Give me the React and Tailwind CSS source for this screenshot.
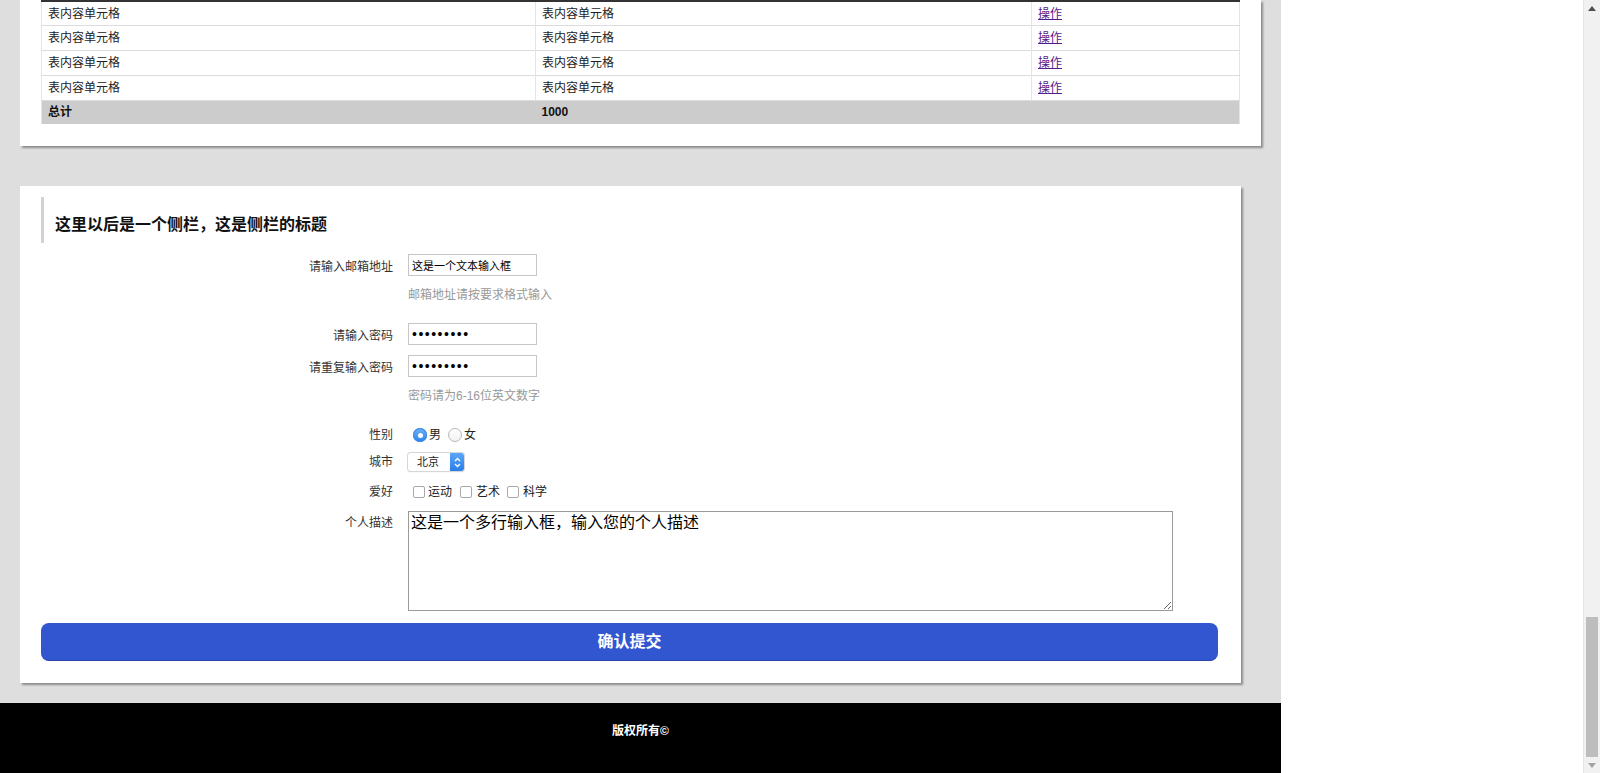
const bodyRows = [1, 2, 3, 4];

function FormRow({ label, children, className = "", top = false, shift = false }) {
  return (
    <div className={`flex ${top ? "items-start" : "items-center"} ${className}`}>
      <label
        className={`w-[352px] shrink-0 text-right text-[12px] leading-[18px] text-[#333] ${top ? "pt-[3px]" : ""} ${shift ? "translate-y-[2px]" : ""}`}
      >
        {label}
      </label>
      <div className="ml-[15px] flex items-center">{children}</div>
    </div>
  );
}

function Hint({ children, className = "" }) {
  return (
    <div className={`ml-[367px] text-[12px] leading-[18px] text-[#999] ${className}`}>{children}</div>
  );
}

function Radio({ checked }) {
  return checked ? (
    <span className="flex h-[14px] w-[14px] items-center justify-center rounded-full bg-gradient-to-b from-[#6cb2f7] to-[#2f84ec] shadow-[inset_0_0_0_1px_#3b86e0]">
      <span className="h-[5px] w-[5px] rounded-full bg-white" />
    </span>
  ) : (
    <span className="h-[14px] w-[14px] rounded-full border border-[#b8b8b8] bg-gradient-to-b from-white to-[#f1f1f1]" />
  );
}

function Checkbox() {
  return <span className="h-[12px] w-[12px] rounded-[2px] border border-[#a9a9a9] bg-white" />;
}

export default function App() {
  return (
    <div className="flex h-[773px] w-[1600px] overflow-hidden bg-white font-['Liberation_Sans','Noto_Sans_CJK_SC',sans-serif] text-[#222]">
      <div className="flex w-[1281px] shrink-0 flex-col bg-[#dedede]">
        {/* table card */}
        <div className="ml-5 w-[1241px] bg-white px-[21px] pb-[22px] shadow-[2px_2px_2px_#8c8c8c]">
          <table className="w-full table-fixed border-collapse border-x border-t-2 border-x-[#e4e4e4] border-t-[#333] text-[12px] text-[#222]">
            <colgroup>
              <col className="w-[494px]" />
              <col className="w-[496px]" />
              <col />
            </colgroup>
            <tbody>
              {bodyRows.map((r) => (
                <tr key={r} className="h-[24.8px] border-b border-[#dcdcdc]">
                  <td className="border-r border-[#e4e4e4] px-[6px] leading-[18px]">表内容单元格</td>
                  <td className="border-r border-[#e4e4e4] px-[6px] leading-[18px]">表内容单元格</td>
                  <td className="px-[6px] leading-[18px]">
                    <a href="#" className="text-[#551a8b] underline">操作</a>
                  </td>
                </tr>
              ))}
              <tr className="h-[24px] bg-[#cccccc] font-bold text-[#111]">
                <td className="px-[6px] leading-[18px]">总计</td>
                <td className="px-[6px] leading-[18px]">1000</td>
                <td />
              </tr>
            </tbody>
          </table>
        </div>

        {/* form card */}
        <div className="ml-5 mt-[40px] w-[1221px] bg-white px-[21px] pb-[22px] pt-[11px] shadow-[2px_2px_2px_#8c8c8c]">
          <div className="flex h-[46px] items-center border-l-[3px] border-[#d2d2d2] pl-[11px] pt-[10px] text-[16px] font-bold text-[#111]">
            这里以后是一个侧栏，这是侧栏的标题
          </div>

          <FormRow label="请输入邮箱地址" className="mt-[11px]" shift>
            <input
              type="text"
              readOnly
              defaultValue="这是一个文本输入框"
              className="h-[22px] w-[129px] border border-[#c6c6c6] px-[3px] text-[11px] text-black outline-none"
            />
          </FormRow>
          <Hint className="mt-[10px]">邮箱地址请按要求格式输入</Hint>

          <FormRow label="请输入密码" className="mt-[19px]" shift>
            <input
              type="password"
              readOnly
              defaultValue="123456789"
              className="h-[22px] w-[129px] border border-[#c6c6c6] px-[3px] text-[14px] tracking-[1.5px] text-black outline-none"
            />
          </FormRow>
          <FormRow label="请重复输入密码" className="mt-[10px]" shift>
            <input
              type="password"
              readOnly
              defaultValue="123456789"
              className="h-[22px] w-[129px] border border-[#c6c6c6] px-[3px] text-[14px] tracking-[1.5px] text-black outline-none"
            />
          </FormRow>
          <Hint className="mt-[10px]">密码请为6-16位英文数字</Hint>

          <FormRow label="性别" className="mt-[21px]">
            <div className="ml-[5px] flex items-center text-[12px] leading-[18px] text-[#222]">
              <Radio checked />
              <span className="ml-[2px]">男</span>
              <span className="ml-[7px]" />
              <Radio />
              <span className="ml-[2px]">女</span>
            </div>
          </FormRow>

          <FormRow label="城市" className="mt-[9px]">
            <div className="flex h-[18px] w-[56px] overflow-hidden rounded-[3px] bg-white shadow-[0_0_0_1px_#d6d6d6,0_1px_1px_#c4c4c4]">
              <span className="flex-1 pl-[9px] text-[11px] leading-[18px] text-[#222]">北京</span>
              <span className="flex w-[14px] items-center justify-center bg-gradient-to-b from-[#5aa6f8] to-[#2a7de9]">
                <svg width="7" height="11" viewBox="0 0 7 11" fill="none" stroke="white" strokeWidth="1.3">
                  <path d="M1 4 L3.5 1.5 L6 4" />
                  <path d="M1 7 L3.5 9.5 L6 7" />
                </svg>
              </span>
            </div>
          </FormRow>

          <FormRow label="爱好" className="mt-[12px]">
            <div className="ml-[5px] flex items-center text-[12px] leading-[18px] text-[#222]">
              <Checkbox />
              <span className="ml-[3px]">运动</span>
              <span className="ml-[8px]" />
              <Checkbox />
              <span className="ml-[4px]">艺术</span>
              <span className="ml-[7px]" />
              <Checkbox />
              <span className="ml-[4px]">科学</span>
            </div>
          </FormRow>

          <FormRow label="个人描述" className="mt-[10px]" top>
            <textarea
              readOnly
              defaultValue="这是一个多行输入框，输入您的个人描述"
              className="h-[100px] w-[765px] border border-[#9a9a9a] px-[2px] py-[1px] text-[16px] leading-[20px] text-black outline-none"
            />
          </FormRow>

          <button
            type="button"
            className="mt-[12px] h-[38px] w-[1177px] rounded-[8px] border-b border-[#2947ad] bg-[#3256d0] text-[16px] font-bold text-white"
          >
            确认提交
          </button>
        </div>

        <footer className="mt-[20px] flex h-[70px] justify-center bg-black pt-[19px] text-[12px] font-bold leading-[18px] text-white">
          版权所有©
        </footer>
      </div>

      <div className="flex-1 bg-white" />

      {/* scrollbar */}
      <div className="flex w-[17px] shrink-0 flex-col border-l border-[#e6e6e6] bg-[#f1f1f1]">
        <div className="flex h-[17px] items-center justify-center">
          <svg width="8" height="5" viewBox="0 0 8 5">
            <path d="M0 5 L4 0 L8 5 Z" fill="#505050" />
          </svg>
        </div>
        <div className="flex-1" />
        <div className="mx-auto h-[140px] w-[12px] bg-[#bdbdbd]" />
        <div className="flex h-[16px] items-center justify-center">
          <svg width="8" height="5" viewBox="0 0 8 5">
            <path d="M0 0 L4 5 L8 0 Z" fill="#a3a3a3" />
          </svg>
        </div>
      </div>
    </div>
  );
}
